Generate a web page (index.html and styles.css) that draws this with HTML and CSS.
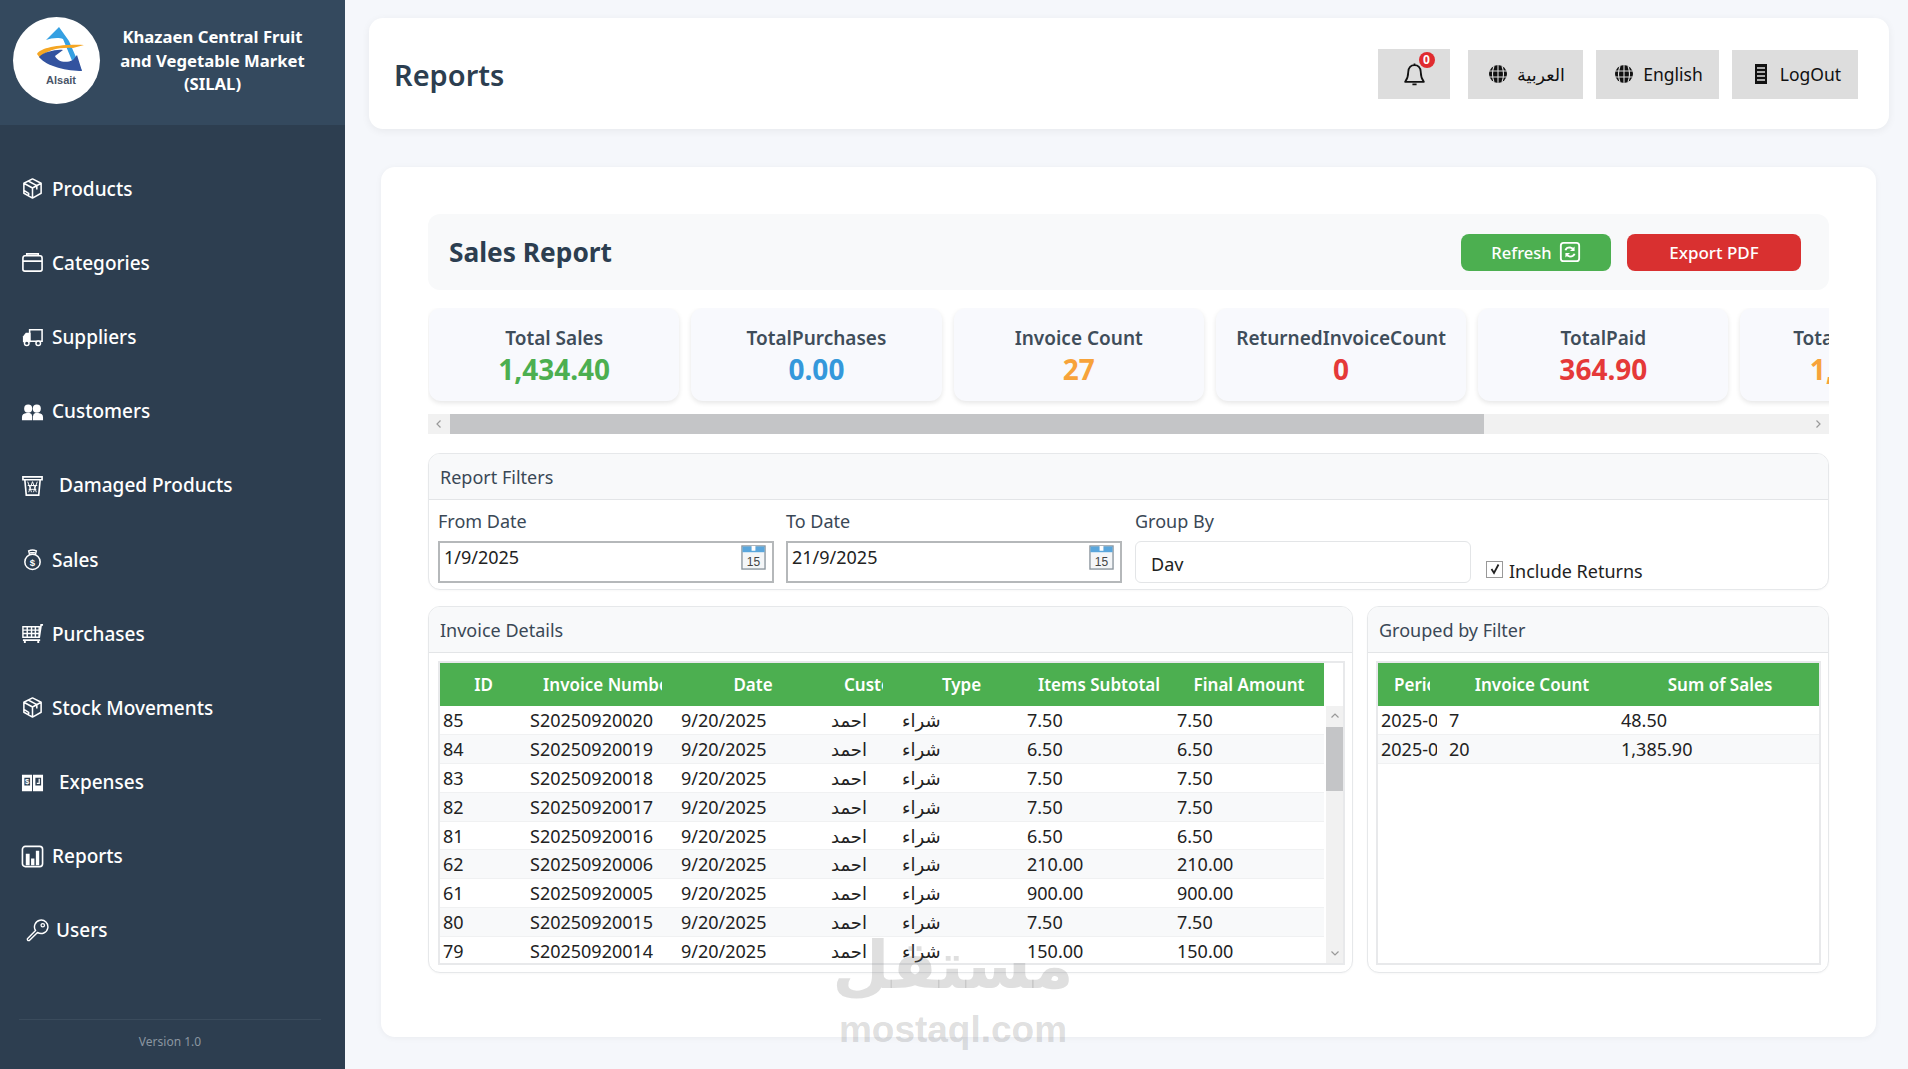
FILE: index.html
```html
<!DOCTYPE html>
<html lang="en">
<head>
<meta charset="utf-8">
<title>Reports</title>
<link rel="stylesheet" href="styles.css">
</head>
<body>
<svg class="sprite" aria-hidden="true">
  <symbol id="i-box" viewBox="0 0 24 24"><path d="M12 2 21 6.5V17L12 22 3 17V6.5Z M3 6.5 12 11.5 21 6.5 M12 11.5V22 M7.5 4.2 16.5 9V13 M3 14 8 17V20" fill="none" stroke="currentColor" stroke-width="1.6" stroke-linejoin="round"/></symbol>
  <symbol id="i-globe" viewBox="0 0 24 24"><circle cx="12" cy="12" r="9" fill="currentColor"/><path d="M3 9H21M3 15H21M12 3V21M8 4Q5 12 8 20M16 4Q19 12 16 20" fill="none" stroke="#ddd" stroke-width="1.1"/></symbol>
  <symbol id="i-cal" viewBox="0 0 26 26"><rect x="1" y="1" width="24" height="24" fill="#f4f6f8" stroke="#8a949c" stroke-width="1.4"/><rect x="1.5" y="1.5" width="23" height="6" fill="#5aa6dc"/><rect x="11" y="1" width="4" height="5" fill="#fff"/><text x="13" y="21.5" class="cal-num">15</text></symbol>
</svg>

<aside class="sidebar">
  <div class="brand">
    <div class="logo">
      <svg viewBox="0 0 87 87" width="87" height="87" class="logo-art">
        <path d="M46 10 33 23C38 21 46 20 50 22L60 46 69 54 56 24Z" fill="#35a0e2"/>
        <path d="M24 37C28 30 50 27 71 28L60 31C48 30 32 33 27 41Z" fill="#f5a623"/>
        <path d="M26 40C30 35 44 32 50 33L42 39C44 44 52 47 60 43L64 38 69 54C55 54 34 50 26 40Z" fill="#33539f"/>
        <text x="48" y="67" class="logo-text">Alsait</text>
      </svg>
    </div>
    <div class="brand-name">Khazaen Central Fruit and Vegetable Market (SILAL)</div>
  </div>
  <nav class="nav">
    <a class="nav-item"><svg class="nav-icon"><use href="#i-box"/></svg><span>Products</span></a>
    <a class="nav-item"><svg class="nav-icon" viewBox="0 0 24 24"><path d="M2 7.5Q2 5 4 5H20Q22 5 22 7.5V19Q22 21 20 21H4Q2 21 2 19ZM2 10.5H22M6 5V3H18V5" fill="none" stroke="currentColor" stroke-width="1.7"/></svg><span>Categories</span></a>
    <a class="nav-item"><svg class="nav-icon" viewBox="0 0 24 24"><path d="M9 5H22V17H9Z" fill="none" stroke="currentColor" stroke-width="1.6"/><path d="M2 18V12L5 8H10V18Z" fill="currentColor"/><circle cx="6" cy="19" r="2.4" fill="#2d3e50" stroke="currentColor" stroke-width="1.5"/><circle cx="18" cy="19" r="2.4" fill="#2d3e50" stroke="currentColor" stroke-width="1.5"/></svg><span>Suppliers</span></a>
    <a class="nav-item"><svg class="nav-icon" viewBox="0 0 24 24"><circle cx="7.5" cy="9" r="4.2" fill="currentColor"/><circle cx="16.5" cy="9" r="4.2" fill="currentColor"/><path d="M1 21V18Q1 14 6 13.5H9Q11.5 14 11.7 17V21ZM12.5 21V17Q12.7 14 15 13.5H18Q23 14 23 18V21Z" fill="currentColor"/></svg><span>Customers</span></a>
    <a class="nav-item nav-item-wide"><svg class="nav-icon" viewBox="0 0 24 24"><path d="M2 3H22V6H2ZM4 6 5.5 22H18.5L20 6" fill="none" stroke="currentColor" stroke-width="1.7"/><path d="M7 8 11 19M12 8 8 19M12 8 16 19M17 8 13 19M7 12H17M8 16H16" stroke="currentColor" stroke-width="1"/></svg><span>Damaged Products</span></a>
    <a class="nav-item"><svg class="nav-icon" viewBox="0 0 24 24"><circle cx="12" cy="14.5" r="8" fill="none" stroke="currentColor" stroke-width="1.6"/><path d="M9 6.8 8 3Q12 1 16 3L15 6.8M9.5 5H14.5" fill="none" stroke="currentColor" stroke-width="1.5"/><text x="12" y="18.5" class="bag-sign">$</text></svg><span>Sales</span></a>
    <a class="nav-item"><svg class="nav-icon" viewBox="0 0 24 24"><path d="M2 5H19V16H2Z M2 8.5H19M2 12H19M6.5 5V16M11 5V16M15 5V16" fill="none" stroke="currentColor" stroke-width="1.5"/><path d="M19 16 21 3H23M2 19H20" fill="none" stroke="currentColor" stroke-width="1.8"/><path d="M4 19V22M18 19V22" stroke="currentColor" stroke-width="2"/></svg><span>Purchases</span></a>
    <a class="nav-item"><svg class="nav-icon"><use href="#i-box"/></svg><span>Stock Movements</span></a>
    <a class="nav-item nav-item-wide"><svg class="nav-icon" viewBox="0 0 24 24"><path d="M1 4H11.5V21H1ZM12.5 4H23V21H12.5Z" fill="currentColor"/><path d="M3.5 7H9.5V15H3.5ZM15 7H21V15H15Z" fill="#2d3e50"/><text x="6.5" y="14" class="exp-sign">$</text><path d="M19 8V13H16.5" fill="none" stroke="#fff" stroke-width="1.3"/></svg><span>Expenses</span></a>
    <a class="nav-item"><svg class="nav-icon" viewBox="0 0 24 24"><rect x="1.5" y="1.5" width="21" height="21" rx="3" fill="none" stroke="currentColor" stroke-width="1.7"/><path d="M5 9H9V21H5ZM10.5 14H14V21H10.5ZM15.5 6H19V21H15.5Z" fill="currentColor"/></svg><span>Reports</span></a>
    <a class="nav-item nav-item-key"><svg class="nav-icon" viewBox="0 0 24 24"><path d="M10 12 1.5 20.5Q1 23 3.5 22.5L12 14A7 7 0 1 0 10 12Z" fill="none" stroke="currentColor" stroke-width="1.5" stroke-linejoin="round"/><circle cx="17.5" cy="6.5" r="1.8" fill="none" stroke="currentColor" stroke-width="1.3"/></svg><span>Users</span></a>
  </nav>
  <div class="version">Version 1.0</div>
</aside>

<main class="main">
  <header class="topbar">
    <h1 class="page-title">Reports</h1>
    <div class="top-actions">
      <button class="top-btn bell-btn">
        <span class="bell-wrap">
          <svg viewBox="0 0 24 24" width="25" height="25"><path d="M12 3Q6.5 3 6 9.5 6 15 3 19H21Q18 15 18 9.5 17.5 3 12 3ZM10 21.5H14M12 1.5V3" fill="none" stroke="#111" stroke-width="1.7" stroke-linejoin="round"/></svg>
          <span class="badge">0</span>
        </span>
      </button>
      <button class="top-btn btn-ar"><svg class="btn-icon"><use href="#i-globe"/></svg><span lang="ar">العربية</span></button>
      <button class="top-btn btn-en"><svg class="btn-icon"><use href="#i-globe"/></svg><span>English</span></button>
      <button class="top-btn btn-out"><svg class="btn-icon" viewBox="0 0 24 24"><path d="M6 2H18V22H6Z" fill="#111"/><path d="M8 6H16M8 10H16M8 14H16M8 18H16" stroke="#ddd" stroke-width="1.3"/></svg><span>LogOut</span></button>
    </div>
  </header>

  <section class="content">
    <div class="report-bar">
      <h2 class="report-title">Sales Report</h2>
      <div class="report-actions">
        <button class="act-btn act-green">Refresh
          <svg viewBox="0 0 24 24" width="22" height="22"><rect x="2" y="2" width="20" height="20" rx="3" fill="none" stroke="#fff" stroke-width="2"/><path d="M7 10Q8 7 12 7L16 8.5M17 14Q16 17 12 17L8 15.5" fill="none" stroke="#fff" stroke-width="2"/><path d="M17 6V11H12ZM7 18V13H12Z" fill="#fff"/></svg>
        </button>
        <button class="act-btn act-red">Export PDF</button>
      </div>
    </div>

    <div class="stat-strip">
      <div class="stat"><div class="stat-label">Total Sales</div><div class="stat-value v-green">1,434.40</div></div>
      <div class="stat"><div class="stat-label">TotalPurchases</div><div class="stat-value v-blue">0.00</div></div>
      <div class="stat"><div class="stat-label">Invoice Count</div><div class="stat-value v-orange">27</div></div>
      <div class="stat"><div class="stat-label">ReturnedInvoiceCount</div><div class="stat-value v-red">0</div></div>
      <div class="stat"><div class="stat-label">TotalPaid</div><div class="stat-value v-red">364.90</div></div>
      <div class="stat"><div class="stat-label">TotalRemaining</div><div class="stat-value v-orange">1,069.50</div></div>
    </div>
    <div class="hscroll">
      <svg class="arrow" viewBox="0 0 8 10" width="8" height="10"><path d="M5.5 1.5 2 5 5.5 8.5" fill="none" stroke="#999" stroke-width="1.2"/></svg>
      <div class="hscroll-track"><div class="hscroll-thumb"></div></div>
      <svg class="arrow" viewBox="0 0 8 10" width="8" height="10"><path d="M2.5 1.5 6 5 2.5 8.5" fill="none" stroke="#999" stroke-width="1.2"/></svg>
    </div>

    <div class="panel filters">
      <div class="panel-head">Report Filters</div>
      <div class="filter-row">
        <div class="field">
          <label class="field-label">From Date</label>
          <div class="date-input"><span>1/9/2025</span><svg class="cal" width="25" height="25"><use href="#i-cal"/></svg></div>
        </div>
        <div class="field">
          <label class="field-label">To Date</label>
          <div class="date-input"><span>21/9/2025</span><svg class="cal" width="25" height="25"><use href="#i-cal"/></svg></div>
        </div>
        <div class="field field-group">
          <label class="field-label">Group By</label>
          <div class="select-box"><span>Day</span></div>
        </div>
        <label class="check">
          <span class="check-box"><svg viewBox="0 0 14 14" width="14" height="14"><path d="M3.5 7 6 11 10.5 2.5" fill="none" stroke="#222" stroke-width="1.8"/></svg></span>
          <span>Include Returns</span>
        </label>
      </div>
    </div>

    <div class="tables">
      <div class="panel panel-inv">
        <div class="panel-head">Invoice Details</div>
        <div class="table-frame">
          <div class="inv-wrap">
            <table class="grid inv-grid">
              <colgroup><col class="c-id"><col class="c-num"><col class="c-date"><col class="c-cust"><col class="c-type"><col class="c-sub"><col class="c-final"></colgroup>
              <thead><tr><th><div>ID</div></th><th><div>Invoice Number</div></th><th><div>Date</div></th><th><div>Customer</div></th><th><div>Type</div></th><th class="th-wide"><div>Items Subtotal</div></th><th><div>Final Amount</div></th></tr></thead>
              <tbody>
                <tr><td>85</td><td>S20250920020</td><td>9/20/2025</td><td>احمد</td><td>شراء</td><td>7.50</td><td>7.50</td></tr>
                <tr><td>84</td><td>S20250920019</td><td>9/20/2025</td><td>احمد</td><td>شراء</td><td>6.50</td><td>6.50</td></tr>
                <tr><td>83</td><td>S20250920018</td><td>9/20/2025</td><td>احمد</td><td>شراء</td><td>7.50</td><td>7.50</td></tr>
                <tr><td>82</td><td>S20250920017</td><td>9/20/2025</td><td>احمد</td><td>شراء</td><td>7.50</td><td>7.50</td></tr>
                <tr><td>81</td><td>S20250920016</td><td>9/20/2025</td><td>احمد</td><td>شراء</td><td>6.50</td><td>6.50</td></tr>
                <tr><td>62</td><td>S20250920006</td><td>9/20/2025</td><td>احمد</td><td>شراء</td><td>210.00</td><td>210.00</td></tr>
                <tr><td>61</td><td>S20250920005</td><td>9/20/2025</td><td>احمد</td><td>شراء</td><td>900.00</td><td>900.00</td></tr>
                <tr><td>80</td><td>S20250920015</td><td>9/20/2025</td><td>احمد</td><td>شراء</td><td>7.50</td><td>7.50</td></tr>
                <tr><td>79</td><td>S20250920014</td><td>9/20/2025</td><td>احمد</td><td>شراء</td><td>150.00</td><td>150.00</td></tr>
              </tbody>
            </table>
            <div class="vscroll">
              <svg viewBox="0 0 10 8" width="10" height="8"><path d="M1.5 5.5 5 2 8.5 5.5" fill="none" stroke="#999" stroke-width="1.2"/></svg>
              <div class="vscroll-track"><div class="vscroll-thumb"></div></div>
              <svg viewBox="0 0 10 8" width="10" height="8"><path d="M1.5 2.5 5 6 8.5 2.5" fill="none" stroke="#999" stroke-width="1.2"/></svg>
            </div>
          </div>
        </div>
      </div>
      <div class="panel panel-grp">
        <div class="panel-head">Grouped by Filter</div>
        <div class="table-frame table-frame-grp">
          <table class="grid grp-grid">
            <colgroup><col class="c-per"><col class="c-cnt"><col class="c-sum"></colgroup>
            <thead><tr><th><div>Period</div></th><th><div>Invoice Count</div></th><th><div>Sum of Sales</div></th></tr></thead>
            <tbody>
              <tr><td><div class="clip">2025-09</div></td><td>7</td><td>48.50</td></tr>
              <tr><td><div class="clip">2025-09</div></td><td>20</td><td>1,385.90</td></tr>
            </tbody>
          </table>
        </div>
      </div>
    </div>
  </section>
  <div class="watermark"><div class="wm-ar" lang="ar">مستقل</div><div class="wm-en">mostaql.com</div></div>
</main>
</body>
</html>
```
FILE: styles.css
```css
* { box-sizing: border-box; }
html, body { margin: 0; height: 100%; }
body {
  display: flex;
  height: 1069px;
  overflow: hidden;
  background: #f5f7fb;
  color: #111;
  font-family: "Noto Sans", "Open Sans", "DejaVu Sans", sans-serif;
}
.sprite { display: none; }

/* Sidebar */
.sidebar {
  width: 345px;
  flex: none;
  display: flex;
  flex-direction: column;
  background: #2d3e50;
  color: #fff;
}
.brand {
  height: 125px;
  display: flex;
  align-items: center;
  padding: 0 0 4px 13px;
  background: #34495e;
}
.logo {
  width: 87px;
  height: 87px;
  flex: none;
  border-radius: 50%;
  background: #fff;
  overflow: hidden;
}
.logo-art { display: block; }
.logo-text { font: 700 11px "Liberation Sans", sans-serif; fill: #4a5568; text-anchor: middle; }
.brand-name {
  flex: 1;
  padding: 0 31px 0 11px;
  text-align: center;
  font-size: 16.7px;
  font-weight: 700;
  line-height: 23.4px;
}
.nav {
  flex: 1;
  display: flex;
  flex-direction: column;
  padding: 26.5px 0 0 21px;
}
.nav-item {
  height: 74.2px;
  display: flex;
  align-items: center;
  gap: 8px;
  font-size: 19px;
  font-weight: 500;
  color: #fff;
}
.nav-item-wide { gap: 15px; }
.nav-item-key { gap: 7px; padding-left: 5px; }
.nav-icon { width: 23px; height: 23px; flex: none; }
.bag-sign { font: 700 10px "Liberation Sans", sans-serif; fill: currentColor; text-anchor: middle; }
.exp-sign { font: 700 8px "Liberation Sans", sans-serif; fill: #fff; text-anchor: middle; }
.version {
  margin: 0 24px 0 19px;
  height: 50px;
  padding-top: 13px;
  border-top: 1px solid #3a4b5c;
  text-align: center;
  font-size: 12px;
  color: #8b96a1;
}

/* Main */
.main {
  flex: 1;
  min-width: 0;
  position: relative;
  padding: 18px 19px 0 24px;
}
.topbar {
  height: 111px;
  display: flex;
  align-items: center;
  justify-content: space-between;
  padding: 0 31px 0 25px;
  background: #fff;
  border-radius: 14px;
  box-shadow: 0 2px 8px rgba(0, 0, 0, .06);
}
.page-title {
  margin: 0;
  padding-top: 2px;
  font-size: 29px;
  font-weight: 600;
  color: #2c3e50;
}
.top-actions { display: flex; gap: 13px; align-items: flex-end; }
.top-btn {
  height: 49px;
  display: flex;
  align-items: center;
  justify-content: center;
  gap: 7px;
  padding: 0;
  border: 0;
  background: #dddddd;
  color: #111;
  font: 400 17.5px "Noto Sans", "DejaVu Sans", sans-serif;
}
.bell-btn { width: 72px; height: 50px; margin-right: 5px; }
.btn-ar { width: 115px; }
.btn-en { width: 123px; }
.btn-out { width: 126px; }
.btn-icon { width: 24px; height: 24px; flex: none; }
.bell-wrap { position: relative; display: block; width: 25px; height: 25px; margin-top: 2px; }
.bell-wrap svg { display: block; }
.badge {
  position: absolute;
  top: -10px;
  left: 17px;
  width: 16px;
  height: 16px;
  border-radius: 50%;
  background: #e02b2f;
  color: #fff;
  font-size: 12px;
  font-weight: 700;
  line-height: 16px;
  text-align: center;
}
.content {
  height: 870px;
  margin: 38px 13px 0 12px;
  padding: 47px;
  background: #fff;
  border-radius: 14px;
  box-shadow: 0 1px 6px rgba(0, 0, 0, .05);
}
.report-bar {
  height: 76px;
  display: flex;
  align-items: center;
  justify-content: space-between;
  padding: 0 28px 0 21px;
  background: #f8f9fa;
  border-radius: 12px;
}
.report-title {
  margin: 0;
  font-size: 26.3px;
  font-weight: 700;
  color: #2c3e50;
}
.report-actions { display: flex; gap: 16px; }
.act-btn {
  height: 37px;
  display: flex;
  align-items: center;
  justify-content: center;
  gap: 7px;
  padding: 0;
  border: 0;
  border-radius: 8px;
  color: #fff;
  font: 500 17px "Noto Sans", sans-serif;
}
.act-green { width: 150px; background: #4caf50; font-size: 16.5px; }
.act-red { width: 174px; background: #d93030; }

.stat-strip {
  display: flex;
  gap: 12px;
  margin-top: 18px;
  padding: 0 0 8px 1px;
  height: 103px;
  overflow: hidden;
}
.stat {
  width: 250.3px;
  height: 93px;
  flex: none;
  padding-top: 18px;
  text-align: center;
  background: #f8f9fd;
  border-radius: 12px;
  box-shadow: 0 2px 5px rgba(0, 0, 0, .1);
}
.stat-label { font-size: 19px; font-weight: 600; line-height: 24px; color: #3f4d5a; white-space: nowrap; }
.stat-value { font-size: 28px; font-weight: 700; line-height: 38px; white-space: nowrap; }
.v-green { color: #4caf50; }
.v-blue { color: #3498db; }
.v-orange { color: #f7a33a; }
.v-red { color: #e53939; }

.hscroll {
  height: 20px;
  margin-top: 3px;
  display: flex;
  align-items: center;
  background: #f1f1f1;
}
.hscroll .arrow { flex: none; margin: 0 7px; }
.hscroll-track { flex: 1; height: 100%; }
.hscroll-thumb { width: 1034px; height: 100%; background: #c4c5c7; }

.panel {
  background: #fff;
  border: 1px solid #e6e8ea;
  border-radius: 12px;
  overflow: hidden;
  box-shadow: 0 1px 2px rgba(0, 0, 0, .03);
}
.panel-head {
  height: 46px;
  padding-left: 11px;
  background: #f8f9fa;
  border-bottom: 1px solid #e3e5e7;
  color: #3a4856;
  font-size: 18px;
  line-height: 46px;
}
.filters { height: 137px; margin-top: 19px; }
.filter-row { display: flex; gap: 12px; padding: 8px 8px 0 9px; }
.field { width: 336px; flex: none; }
.field-group { margin-left: 1px; }
.field-label { display: block; height: 33px; font-size: 18px; line-height: 26px; color: #3a4856; }
.date-input {
  height: 42px;
  display: flex;
  justify-content: space-between;
  padding: 3px 6px 0 4px;
  border: 2px solid #b5b8ba;
  font-size: 18px;
  line-height: 22px;
  color: #222;
}
.cal { flex: none; margin-top: -1px; }
.cal-num { font: 400 12.5px "Liberation Sans", sans-serif; fill: #444; text-anchor: middle; }
.select-box {
  height: 42px;
  padding: 11px 15px 0;
  border: 1px solid #e3e5e7;
  border-radius: 6px;
  font-size: 18px;
  color: #222;
}
.select-box span { display: block; height: 18px; line-height: 22px; overflow: hidden; }
.check {
  display: flex;
  align-items: center;
  gap: 6px;
  height: 26px;
  margin: 50px 0 0 3px;
  font-size: 18px;
  color: #222;
}
.check-box {
  width: 17px;
  height: 17px;
  margin-top: -4px;
  display: flex;
  align-items: center;
  justify-content: center;
  border: 1px solid #999;
  background: #fff;
}

.tables { display: flex; gap: 14px; margin-top: 16px; height: 367px; }
.panel-inv { width: 925px; flex: none; }
.panel-grp { flex: 1; min-width: 0; }
.table-frame {
  height: 304px;
  margin: 8px 7px 0 9px;
  border: 2px solid #e8e9eb;
  background: #fff;
  overflow: hidden;
}
.table-frame-grp { margin-left: 8px; }
.inv-wrap { display: flex; height: 100%; }
.grid {
  border-collapse: collapse;
  table-layout: fixed;
  align-self: flex-start;
  color: #222;
}
.inv-grid { width: 884px; flex: none; }
.grp-grid { width: 100%; }
.c-id { width: 87px; }
.c-num { width: 151px; }
.c-date { width: 150px; }
.c-cust { width: 71px; }
.c-type { width: 125px; }
.c-sub { width: 150px; }
.c-final { width: 150px; }
.c-per { width: 68px; }
.c-cnt { width: 172px; }
.c-sum { width: 204px; }
.grid th {
  height: 43px;
  padding: 0 16px;
  background: #4caf50;
  color: #fff;
  font-size: 17px;
  font-weight: 600;
  text-align: center;
}
.grid th.th-wide { padding: 0 10px; }
.grid th div { overflow: hidden; white-space: nowrap; }
.grid td {
  height: 28.8px;
  padding: 0 3px;
  border-bottom: 1px solid #f0f1f2;
  white-space: nowrap;
  overflow: hidden;
  font-size: 18px;
  line-height: 26px;
}
.grid tbody tr:nth-child(even) td { background: #f8f9fa; }
.clip { overflow: hidden; width: 56px; }
.vscroll {
  width: 18px;
  margin-left: 2px;
  margin-top: 43px;
  display: flex;
  flex-direction: column;
  align-items: center;
  background: #f1f1f1;
}
.vscroll svg { flex: none; margin: 6px 0; }
.vscroll-track { flex: 1; width: 100%; }
.vscroll-thumb { height: 64px; margin-top: 1px; background: #c4c5c7; }

.watermark {
  position: absolute;
  left: 478px;
  top: 920px;
  width: 260px;
  text-align: center;
  color: rgba(120, 120, 120, .24);
  pointer-events: none;
}
.wm-ar { font: 700 66px/92px "DejaVu Sans", sans-serif; }
.wm-en { font: 700 37px/44px "Liberation Sans", sans-serif; margin-top: -4px; }
```
